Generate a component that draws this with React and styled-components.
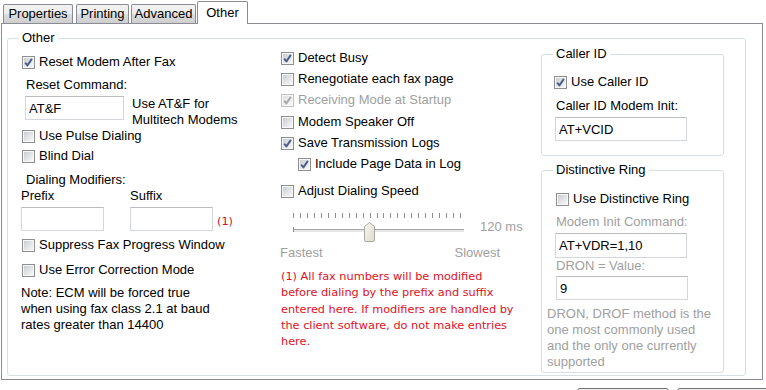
import React from "react";
import styled, { createGlobalStyle } from "styled-components";

const GlobalStyle = createGlobalStyle`
  html, body {
    margin: 0;
    padding: 0;
    background: #fff;
    overflow: hidden;
  }
  body {
    font-family: "Liberation Sans", Arial, sans-serif;
    font-size: 13px;
    color: #000;
  }
`;

const Window = styled.div`
  width: 766px;
  height: 390px;
  overflow: hidden;
  background: #fff;
`;

const TabStrip = styled.div`
  display: flex;
  align-items: flex-end;
  height: 23px;
  position: relative;
  z-index: 1;
`;

const Tab = styled.div`
  box-sizing: border-box;
  width: ${(p) => p.$w}px;
  height: ${(p) => (p.$active ? 23 : 19)}px;
  margin-left: ${(p) => p.$ml || 0}px;
  margin-bottom: ${(p) => (p.$active ? -1 : 0)}px;
  border: 1px solid #898c95;
  border-bottom: none;
  border-radius: 2px 2px 0 0;
  background: ${(p) =>
    p.$active
      ? "#fff"
      : "linear-gradient(#f2f2f2 0%, #ebebeb 50%, #dddddd 51%, #cfcfcf 100%)"};
  display: flex;
  align-items: center;
  justify-content: center;
  line-height: 16px;
  white-space: nowrap;
`;

const Panel = styled.div`
  box-sizing: border-box;
  width: 762px;
  height: 357px;
  margin-left: 1px;
  border: 1px solid #898c95;
  padding: 6px 0 0 5px;
  background: #fff;
`;

const Group = styled.fieldset`
  box-sizing: border-box;
  width: ${(p) => p.$w}px;
  height: ${(p) => p.$h}px;
  margin: ${(p) => p.$mt || 0}px 0 0 0;
  padding: 0;
  border: 1px solid #d5dfe5;
  border-radius: 3px;
  min-inline-size: 0;
`;

const Legend = styled.legend`
  margin-left: 11px;
  padding: 0 3px;
  line-height: 16px;
  color: #000;
`;

const Columns = styled.div`
  display: flex;
  padding-left: 13px;
`;

const Column = styled.div`
  display: flex;
  flex-direction: column;
  width: ${(p) => p.$w}px;
  flex: none;
`;

const CheckRow = styled.div`
  display: flex;
  align-items: center;
  gap: 4px;
  height: 16px;
  line-height: 16px;
  margin-top: ${(p) => p.$mt || 0}px;
  margin-left: ${(p) => p.$ml || 0}px;
  color: ${(p) => (p.$disabled ? "#a0a0a0" : "#000")};
  white-space: nowrap;
`;

const Box = styled.span`
  position: relative;
  flex: none;
  box-sizing: border-box;
  width: 13px;
  height: 13px;
  border: 1px solid ${(p) => (p.$disabled ? "#c2c2c2" : "#8e8f8f")};
  background: #f7f7f7;

  &::before {
    content: "";
    position: absolute;
    inset: 1px;
    background: linear-gradient(135deg, #c9cdd2 0%, #e4e5e7 55%, #f8f8f8 100%);
    opacity: ${(p) => (p.$disabled ? 0.5 : 1)};
  }

  svg {
    position: absolute;
    left: 0;
    top: 0;
  }
`;

const Text = styled.div`
  line-height: ${(p) => p.$lh || 16}px;
  margin-top: ${(p) => p.$mt || 0}px;
  margin-left: ${(p) => p.$ml || 0}px;
  color: ${(p) => (p.$muted ? "#a0a0a0" : "#000")};
  white-space: nowrap;
`;

const Field = styled.input`
  box-sizing: border-box;
  flex: none;
  width: ${(p) => p.$w}px;
  height: ${(p) => p.$h || 24}px;
  margin: ${(p) => p.$mt || 0}px 0 0 ${(p) => p.$ml || 0}px;
  padding: 0 3px;
  border: 1px solid #d3d6db;
  border-top-color: #b9bdc3;
  background: #fff;
  font: 13px "Liberation Sans", Arial, sans-serif;
  color: #000;
  outline: none;
`;

const InlineRow = styled.div`
  display: flex;
  align-items: flex-start;
  margin-top: ${(p) => p.$mt || 0}px;
  margin-left: ${(p) => p.$ml || 0}px;
`;

const PairRow = styled.div`
  display: grid;
  grid-template-columns: 109px 87px auto;
  align-items: center;
  margin-top: ${(p) => p.$mt || 0}px;
  line-height: 16px;
`;

const Marker = styled.span`
  font-family: "DejaVu Sans", Tahoma, sans-serif;
  font-size: 11.3px;
  color: #c8102e;
  line-height: 16px;
  padding-top: 5px;
`;

const RedNote = styled.div`
  margin-top: ${(p) => p.$mt || 0}px;
  font-family: "DejaVu Sans", Tahoma, sans-serif;
  font-size: 11.3px;
  line-height: 16.25px;
  color: #e0101e;
  white-space: nowrap;
`;

const SliderRow = styled.div`
  display: flex;
  align-items: center;
  height: 32px;
  margin-top: ${(p) => p.$mt || 0}px;
  margin-left: 12px;
`;

const SliderValue = styled.span`
  margin-left: 12px;
  color: #a0a0a0;
`;

const ScaleLabels = styled.div`
  display: flex;
  justify-content: space-between;
  width: 220px;
  margin-top: ${(p) => p.$mt || 0}px;
  margin-left: -1px;
  line-height: 16px;
  color: #a0a0a0;
`;

const ButtonRow = styled.div`
  display: flex;
  gap: 8px;
  margin-top: 8px;
  padding-left: 577px;
`;

const Button = styled.button`
  box-sizing: border-box;
  flex: none;
  width: 92px;
  height: 23px;
  border: 1px solid #707070;
  border-radius: 3px;
  background: linear-gradient(#f2f2f2 0%, #ebebeb 50%, #dddddd 51%, #cfcfcf 100%);
`;

const Check = ({ checked, disabled }) => (
  <Box $disabled={disabled}>
    {checked && (
      <svg width="11" height="11" viewBox="0 0 11 11">
        <path
          d="M2.2 5.6 L4.4 8.4 L8.9 1.9"
          fill="none"
          stroke={disabled ? "#a9a9a9" : "#4a5d8e"}
          strokeWidth="1.9"
          strokeLinejoin="round"
        />
      </svg>
    )}
  </Box>
);

const CheckItem = ({ label, checked, disabled, mt, ml }) => (
  <CheckRow $mt={mt} $ml={ml} $disabled={disabled}>
    <Check checked={checked} disabled={disabled} />
    <span>{label}</span>
  </CheckRow>
);

const Slider = () => {
  const ticks = Array.from({ length: 25 }, (_, i) => 0.5 + Math.round(i * 6.96));
  return (
    <svg width="175" height="32" viewBox="0 0 175 32">
      {ticks.map((x) => (
        <line key={x} x1={x} y1="3" x2={x} y2="8" stroke="#8f8f8f" strokeWidth="1" />
      ))}
      <rect x="0" y="19" width="171" height="3" fill="#e6e6e6" />
      <line x1="0" y1="19.5" x2="171" y2="19.5" stroke="#a7a7a7" />
      <line x1="0.5" y1="17" x2="0.5" y2="22" stroke="#8f8f8f" />
      <defs>
        <linearGradient id="thumb" x1="0" y1="0" x2="1" y2="1">
          <stop offset="0" stopColor="#f7f6f1" />
          <stop offset="1" stopColor="#dedcd0" />
        </linearGradient>
      </defs>
      <path
        d="M71.5 16.5 L76.5 12.5 L81.5 16.5 L81.5 30 Q81.5 31.5 80 31.5 L73 31.5 Q71.5 31.5 71.5 30 Z"
        fill="url(#thumb)"
        stroke="#aaa99f"
      />
    </svg>
  );
};

export default function App() {
  return (
    <Window>
      <GlobalStyle />
      <TabStrip>
        <Tab $w={70} $ml={3}>Properties</Tab>
        <Tab $w={53} $ml={3}>Printing</Tab>
        <Tab $w={65} $ml={2}>Advanced</Tab>
        <Tab $w={51} $ml={1} $active>
          Other
        </Tab>
      </TabStrip>
      <Panel>
        <Group $w={739} $h={346}>
          <Legend>Other</Legend>
          <Columns>
            <Column $w={260}>
              <CheckItem label="Reset Modem After Fax" checked mt={8} ml={1} />
              <Text $mt={7} $ml={5}>Reset Command:</Text>
              <InlineRow $mt={3}>
                <Field $w={99} $ml={4} value="AT&F" readOnly />
                <Text $ml={8}>
                  Use AT&amp;F for
                  <br />
                  Multitech Modems
                </Text>
              </InlineRow>
              <CheckItem label="Use Pulse Dialing" ml={1} />
              <CheckItem label="Blind Dial" mt={4} ml={1} />
              <Text $mt={8} $ml={5}>Dialing Modifiers:</Text>
              <PairRow>
                <span>Prefix</span>
                <span>Suffix</span>
              </PairRow>
              <PairRow $mt={3}>
                <Field $w={83} value="" readOnly />
                <Field $w={83} value="" readOnly />
                <Marker>(1)</Marker>
              </PairRow>
              <CheckItem label="Suppress Fax Progress Window" mt={6} ml={1} />
              <CheckItem label="Use Error Correction Mode" mt={9} ml={1} />
              <Text $mt={7}>
                Note: ECM will be forced true
                <br />
                when using fax class 2.1 at baud
                <br />
                rates greater than 14400
              </Text>
            </Column>

            <Column $w={260}>
              <CheckItem label="Detect Busy" checked mt={4} />
              <CheckItem label="Renegotiate each fax page" mt={5} />
              <CheckItem label="Receiving Mode at Startup" checked disabled mt={5} />
              <CheckItem label="Modem Speaker Off" mt={6} />
              <CheckItem label="Save Transmission Logs" checked mt={5} />
              <CheckItem label="Include Page Data in Log" checked mt={5} ml={17} />
              <CheckItem label="Adjust Dialing Speed" mt={11} />
              <SliderRow $mt={11}>
                <Slider />
                <SliderValue>120 ms</SliderValue>
              </SliderRow>
              <ScaleLabels $mt={3}>
                <span>Fastest</span>
                <span>Slowest</span>
              </ScaleLabels>
              <RedNote $mt={8}>
                (1) All fax numbers will be modified
                <br />
                before dialing by the prefix and suffix
                <br />
                entered here. If modifiers are handled by
                <br />
                the client software, do not make entries
                <br />
                here.
              </RedNote>
            </Column>

            <Column $w={183}>
              <Group $w={183} $h={110}>
                <Legend>Caller ID</Legend>
                <CheckItem label="Use Caller ID" checked mt={12} ml={12} />
                <Text $mt={8} $ml={14}>Caller ID Modem Init:</Text>
                <Field $w={132} $mt={3} $ml={13} value="AT+VCID" readOnly />
              </Group>
              <Group $w={183} $h={211} $mt={6}>
                <Legend>Distinctive Ring</Legend>
                <CheckItem label="Use Distinctive Ring" mt={13} ml={14} />
                <Text $mt={7} $ml={14} $muted>
                  Modem Init Command:
                </Text>
                <Field $w={132} $h={25} $mt={3} $ml={13} value="AT+VDR=1,10" readOnly />
                <Text $ml={14} $muted>
                  DRON = Value:
                </Text>
                <Field $w={132} $mt={2} $ml={14} value="9" readOnly />
                <Text $mt={6} $ml={5} $muted>
                  DRON, DROF method is the
                  <br />
                  one most commonly used
                  <br />
                  and the only one currently
                  <br />
                  supported
                </Text>
              </Group>
            </Column>
          </Columns>
        </Group>
      </Panel>
      <ButtonRow>
        <Button aria-label="OK" />
        <Button aria-label="Cancel" />
      </ButtonRow>
    </Window>
  );
}
